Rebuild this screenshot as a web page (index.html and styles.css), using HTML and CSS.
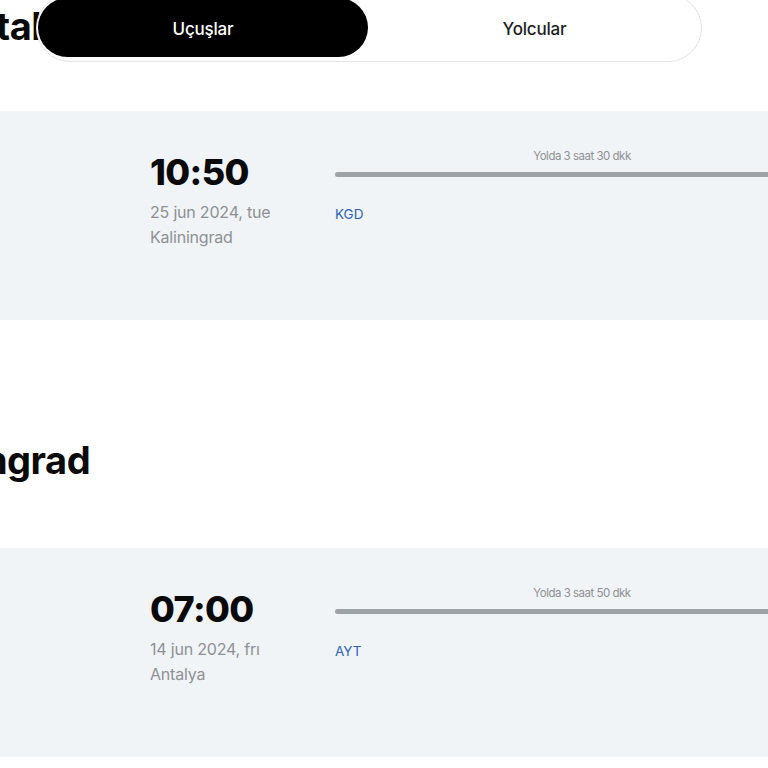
FILE: index.html
```html
<!DOCTYPE html>
<html lang="tr">
<head>
<meta charset="utf-8">
<link rel="stylesheet" href="styles.css">
</head>
<body>
<div class="page">
  <div class="tabs">
    <div class="tab tab-active">Uçuşlar</div>
    <div class="tab">Yolcular</div>
  </div>

  <section class="leg">
    <h2 class="leg-title leg-title-first">Antalya</h2>
    <div class="panel">
      <div class="point">
        <div class="time">10:50</div>
        <div class="date">25 jun 2024, tue</div>
        <div class="city">Kaliningrad</div>
      </div>
      <div class="route">
        <div class="duration">Yolda 3 saat 30 dkk</div>
        <div class="track"></div>
        <div class="code">KGD</div>
      </div>
    </div>
  </section>

  <section class="leg leg-second">
    <h2 class="leg-title leg-title-second">Kaliningrad</h2>
    <div class="panel">
      <div class="point">
        <div class="time">07:00</div>
        <div class="date">14 jun 2024, frı</div>
        <div class="city">Antalya</div>
      </div>
      <div class="route">
        <div class="duration">Yolda 3 saat 50 dkk</div>
        <div class="track"></div>
        <div class="code">AYT</div>
      </div>
    </div>
  </section>
</div>
</body>
</html>
```

FILE: styles.css
```css
html, body {
  margin: 0;
  padding: 0;
  background: #ffffff;
  overflow: hidden;
}

body {
  font-family: Inter, "Noto Sans", "DejaVu Sans", sans-serif;
  color: #0b0b0b;
  width: 768px;
  height: 768px;
}

.page {
  position: relative;
  width: 768px;
  height: 768px;
  overflow: hidden;
}

.tabs {
  position: absolute;
  top: -6px;
  left: 36px;
  width: 666px;
  height: 68px;
  box-sizing: border-box;
  border: 1px solid #e3e5e8;
  border-radius: 34px;
  background: #ffffff;
  padding: 3px 0 4px 1px;
  display: grid;
  grid-template-columns: 330px 1fr;
  z-index: 2;
}

.tab {
  display: flex;
  align-items: center;
  justify-content: center;
  font-size: 17px;
  font-weight: 500;
  color: #1d1d1f;
  letter-spacing: -0.2px;
  padding-top: 2px;
}

.tab-active {
  background: #000000;
  color: #ffffff;
  border-radius: 30px;
}

.leg-title {
  margin: 0;
  font-size: 38px;
  font-weight: 700;
  line-height: 52px;
  height: 52px;
  white-space: nowrap;
  letter-spacing: -0.5px;
  color: #0a0a0a;
}

.leg-title-first {
  margin-left: -55px;
}

.leg-title-second {
  margin-left: -117px;
}

.leg-second {
  margin-top: 114px;
}

.panel {
  margin-top: 59px;
  height: 209px;
  background: #f1f4f7;
  display: flex;
  padding-left: 150px;
  box-sizing: border-box;
  width: 900px;
}

.leg-second .panel {
  margin-top: 62px;
}

.point {
  width: 185px;
  flex: none;
  padding-top: 43px;
}

.time {
  font-size: 36px;
  font-weight: 800;
  line-height: 36px;
  letter-spacing: -0.6px;
  color: #0a0a0a;
}

.date,
.city {
  font-size: 16px;
  line-height: 25px;
  color: #8d9094;
  letter-spacing: -0.2px;
}

.date {
  margin-top: 10px;
}

.route {
  width: 494px;
  flex: none;
  padding-top: 38px;
}

.duration {
  text-align: center;
  font-size: 11.5px;
  line-height: 14px;
  color: #8d9094;
  letter-spacing: -0.5px;
}

.track {
  margin-top: 9px;
  height: 5px;
  background: #9da2a7;
  border-radius: 3px 0 0 3px;
}

.code {
  margin-top: 29px;
  font-size: 13.5px;
  line-height: 16px;
  color: #2f62b4;
}
```
